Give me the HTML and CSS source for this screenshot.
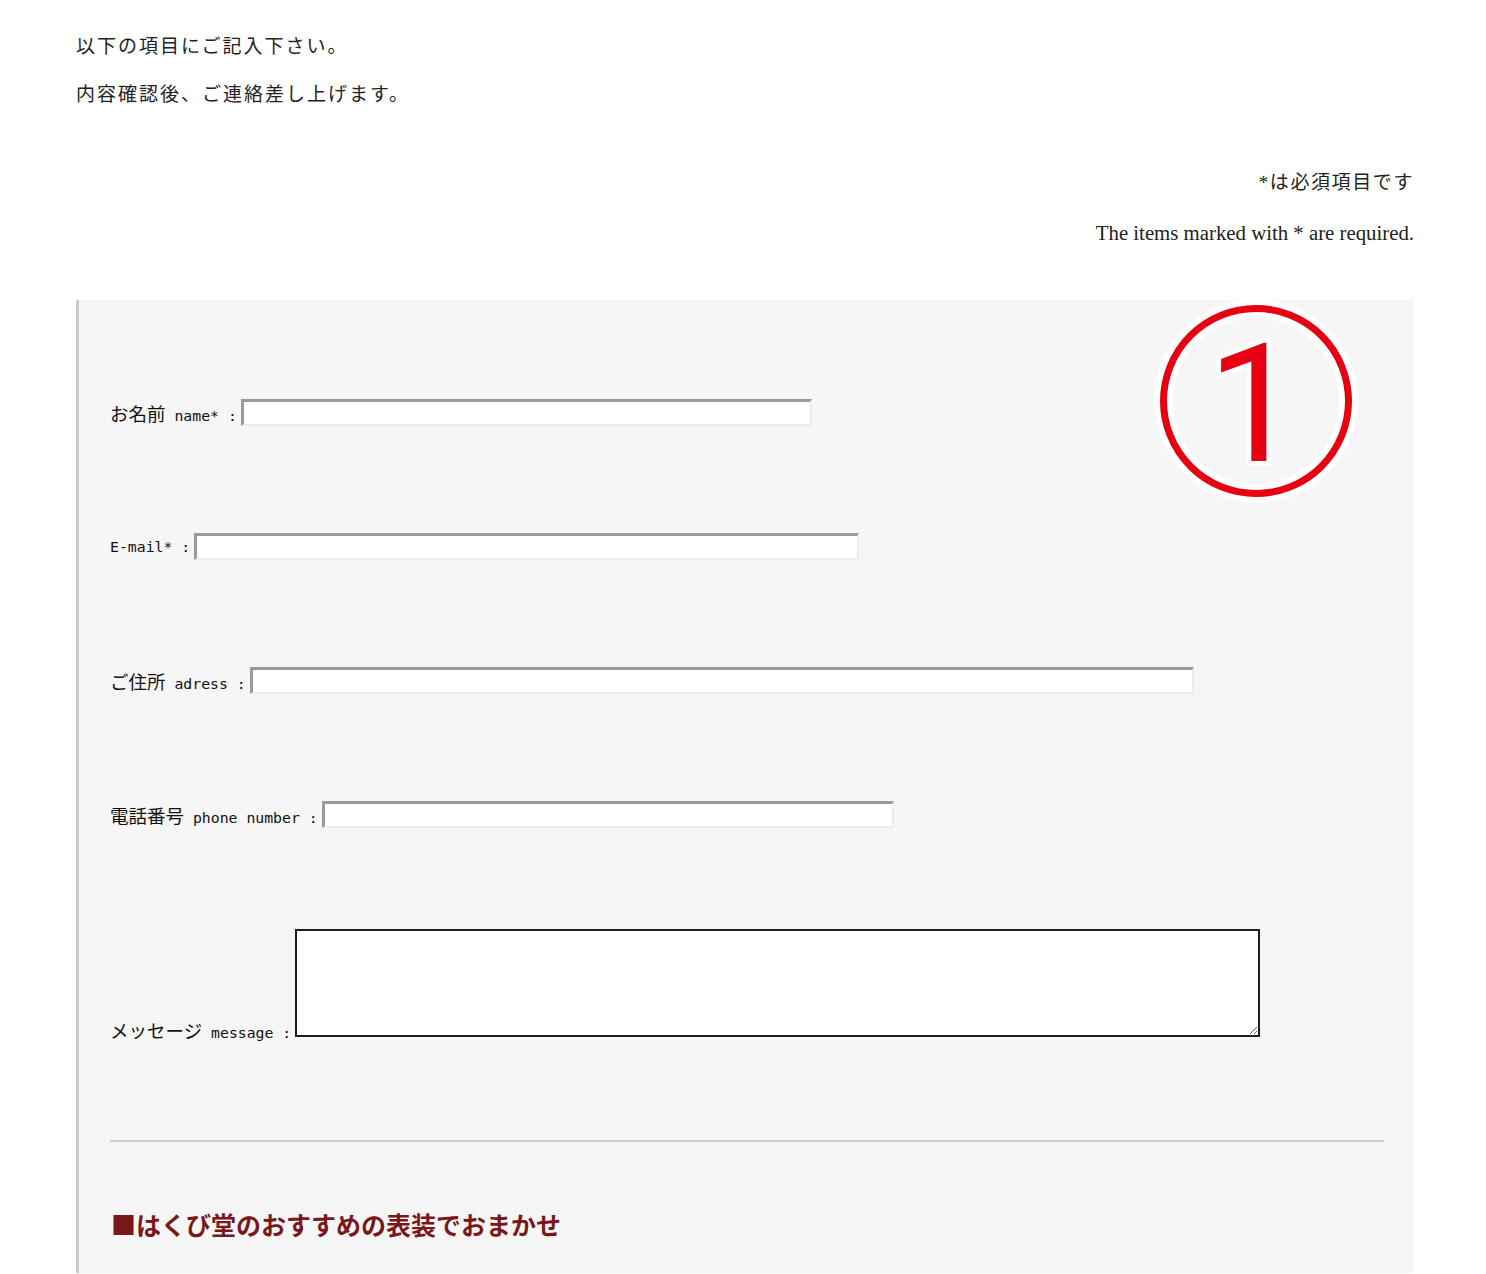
FILE: index.html
```html
<!DOCTYPE html>
<html lang="ja">
<head>
<meta charset="utf-8">
<title>お問い合わせ</title>
<link rel="stylesheet" href="styles.css">
</head>
<body>
<div class="page">
  <div class="intro">
    <p>以下の項目にご記入下さい。</p>
    <p class="second">内容確認後、ご連絡差し上げます。</p>
  </div>
  <div class="required">
    <p>*は必須項目です</p>
    <p class="en">The items marked with * are required.</p>
  </div>
  <form class="panel">
    <svg class="badge" width="210" height="210" viewBox="0 0 210 210" aria-hidden="true">
      <circle cx="105" cy="105" r="92.5" fill="none" stroke="#ffffff" stroke-width="19"/>
      <circle cx="105" cy="105" r="92.5" fill="none" stroke="#e60012" stroke-width="7"/>
      <text x="103" y="165" text-anchor="middle" class="badge-num">1</text>
    </svg>
    <div class="row">
      <label class="label" for="f-name"><span class="ja">お名前</span> <span class="en">name* :</span></label>
      <input class="field w-name" id="f-name" type="text">
    </div>
    <div class="row">
      <label class="label" for="f-mail"><span class="en">E-mail* :</span></label>
      <input class="field w-mail" id="f-mail" type="text">
    </div>
    <div class="row">
      <label class="label" for="f-addr"><span class="ja">ご住所</span> <span class="en">adress :</span></label>
      <input class="field w-addr" id="f-addr" type="text">
    </div>
    <div class="row">
      <label class="label" for="f-tel"><span class="ja">電話番号</span> <span class="en">phone number :</span></label>
      <input class="field w-tel" id="f-tel" type="text">
    </div>
    <div class="row row-msg">
      <label class="label label-msg" for="f-msg"><span class="ja">メッセージ</span> <span class="en">message :</span></label>
      <textarea class="message" id="f-msg"></textarea>
    </div>
    <hr class="rule">
    <h2 class="section-title">■はくび堂のおすすめの表装でおまかせ</h2>
  </form>
</div>
</body>
</html>
```

FILE: styles.css
```css
html, body {
  margin: 0;
  padding: 0;
  background: #ffffff;
}

body {
  font-family: "Liberation Serif", "Noto Sans CJK JP", serif;
  color: #222222;
}

.page {
  width: 1338px;
  margin-left: 76px;
  padding-top: 33px;
}

.intro p,
.required p {
  margin: 0;
  font-size: 19px;
  line-height: 27px;
  letter-spacing: 2px;
}

.intro .second {
  margin-top: 21px;
}

.required {
  margin-top: 61px;
  text-align: right;
}

.required p {
  letter-spacing: 1.6px;
}

.required .en {
  margin-top: 23px;
  font-size: 20.8px;
  letter-spacing: 0;
}

.panel {
  position: relative;
  margin-top: 54px;
  border-left: 3px solid #cccccc;
  background: #f6f6f6;
  padding: 99px 30px 30px 31px;
}

.badge {
  position: absolute;
  top: -4px;
  right: 53px;
}

.badge-num {
  font-family: "Roboto", "Liberation Sans", sans-serif;
  font-weight: 400;
  font-size: 166px;
  fill: #e60012;
  stroke: #ffffff;
  stroke-width: 9px;
  paint-order: stroke;
}

.row {
  display: flex;
  align-items: center;
  height: 27px;
  margin-bottom: 107px;
}

.row-msg {
  align-items: flex-end;
  height: 108px;
  margin-top: -6px;
  margin-bottom: 103px;
}

.label {
  display: block;
  white-space: nowrap;
  color: #111111;
  margin-right: 4px;
  font-family: "DejaVu Sans Mono", monospace;
  font-size: 14.8px;
}

.label .ja {
  font-family: "Noto Sans CJK JP", sans-serif;
  font-size: 18.5px;
}

.label .en {
  font-family: "DejaVu Sans Mono", monospace;
  font-size: 14.8px;
}

.label-msg {
  line-height: 22px;
  margin-bottom: -7px;
}

.field {
  box-sizing: border-box;
  height: 27px;
  margin: 0;
  padding: 2px 4px;
  background: #ffffff;
  border-style: solid;
  border-width: 3px 2px 2px 3px;
  border-color: #9a9a9a #ececec #ececec #9a9a9a;
  outline: none;
}

.w-name { width: 571px; }
.w-mail { width: 665px; }
.w-addr { width: 944px; }
.w-tel  { width: 572px; }

.message {
  box-sizing: border-box;
  width: 965px;
  height: 108px;
  margin: 0;
  background: #ffffff;
  border: 2px solid #1e1e1e;
}

.rule {
  margin: 0;
  border: 0;
  height: 2px;
  background: #cfcfcf;
}

.section-title {
  margin: 64px 0 0 1px;
  font-family: "Noto Sans CJK JP", sans-serif;
  font-weight: 700;
  font-size: 25px;
  line-height: 37px;
  letter-spacing: 0;
  color: #7a171b;
}
```
